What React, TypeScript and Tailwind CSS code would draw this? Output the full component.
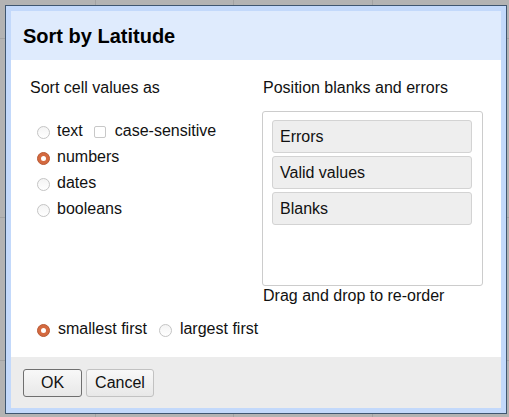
import React from "react";

function Radio({ checked }: { checked?: boolean }) {
  if (checked) {
    return (
      <span className="flex h-[13px] w-[13px] shrink-0 items-center justify-center rounded-full border border-[#b85a35] bg-[#d4693f] translate-y-[1px]">
        <span className="h-[5px] w-[5px] rounded-full bg-white" />
      </span>
    );
  }
  return (
    <span className="block h-[13px] w-[13px] shrink-0 rounded-full border border-[#c4c4c4] bg-gradient-to-b from-[#f4f4f4] to-white translate-y-[1px]" />
  );
}

function Checkbox() {
  return <span className="block h-[12px] w-[12px] shrink-0 rounded-[2px] border border-[#c8c8c8] bg-white translate-y-[1px]" />;
}

export default function App() {
  return (
    <div
      className="relative h-[417px] w-[509px] overflow-hidden bg-[#b3b3b3] text-[16px] text-[#111]"
      style={{ fontFamily: '"Liberation Sans", Arial, sans-serif' }}
    >
      <div className="absolute left-[95px] top-0 h-full w-px bg-[#a2a2a2]" />
      <div className="absolute left-[233px] top-0 h-full w-px bg-[#a2a2a2]" />
      <div className="absolute left-[372px] top-0 h-full w-px bg-[#a2a2a2]" />
      <div className="absolute left-0 top-[38px] h-px w-full bg-[#a2a2a2]" />
      <div className="absolute left-0 top-[217px] h-px w-full bg-[#a2a2a2]" />
      <div className="absolute left-0 top-[360px] h-px w-full bg-[#a2a2a2]" />

      <div className="absolute left-[5px] top-[5px] w-[502px] border border-[#3f5670] bg-[#c3d9fb] p-[5px]">
        <div className="flex h-[397px] w-[490px] flex-col">
          <div className="flex h-[49px] items-center bg-[#dfebfd] pl-[12px]">
            <span className="text-[20px] font-bold leading-none text-black">Sort by Latitude</span>
          </div>

          <div className="flex h-[297px] flex-col bg-white pl-[19px] pt-[19px]">
            <div className="flex">
              <div className="w-[233px]">
                <div className="h-[18px] leading-[18px]">Sort cell values as</div>
                <div className="mt-[21px] flex flex-col pl-[7px]">
                  <div className="flex h-[26px] items-center">
                    <Radio />
                    <span className="ml-[7px]">text</span>
                    <span className="ml-[11px]"><Checkbox /></span>
                    <span className="ml-[9px]">case-sensitive</span>
                  </div>
                  <div className="flex h-[26px] items-center">
                    <Radio checked />
                    <span className="ml-[7px]">numbers</span>
                  </div>
                  <div className="flex h-[26px] items-center">
                    <Radio />
                    <span className="ml-[7px]">dates</span>
                  </div>
                  <div className="flex h-[26px] items-center">
                    <Radio />
                    <span className="ml-[7px]">booleans</span>
                  </div>
                </div>
              </div>
              <div className="w-[220px]">
                <div className="h-[18px] leading-[18px]">Position blanks and errors</div>
                <div className="ml-[-1px] mt-[14px] flex h-[175px] flex-col gap-[3px] rounded-[3px] border border-[#cccccc] pl-[9px] pr-[10px] pt-[8px]">
                  {["Errors", "Valid values", "Blanks"].map((t) => (
                    <div
                      key={t}
                      className="flex h-[33px] items-center rounded-[3px] border border-[#d3d3d3] bg-[#eeeeee] pl-[7px]"
                    >
                      {t}
                    </div>
                  ))}
                </div>
                <div className="mt-[1px] h-[18px] leading-[18px]">Drag and drop to re-order</div>
              </div>
            </div>
            <div className="mt-[14px] flex h-[20px] items-center pl-[7px]">
              <Radio checked />
              <span className="ml-[8px]">smallest first</span>
              <span className="ml-[12px]"><Radio /></span>
              <span className="ml-[8px]">largest first</span>
            </div>
          </div>

          <div className="flex h-[51px] items-start gap-[4px] bg-[#ececec] pl-[12px] pt-[12px]">
            <button className="flex h-[28px] w-[59px] items-center justify-center rounded-[3px] border border-[#6f6f6f] bg-gradient-to-b from-[#f8f8f8] to-[#e8e8e8] text-[16px] text-[#111]">
              OK
            </button>
            <button className="flex h-[28px] w-[68px] items-center justify-center rounded-[3px] border border-[#c2c2c2] bg-gradient-to-b from-[#f8f8f8] to-[#e8e8e8] text-[16px] text-[#111]">
              Cancel
            </button>
          </div>
        </div>
      </div>
    </div>
  );
}
